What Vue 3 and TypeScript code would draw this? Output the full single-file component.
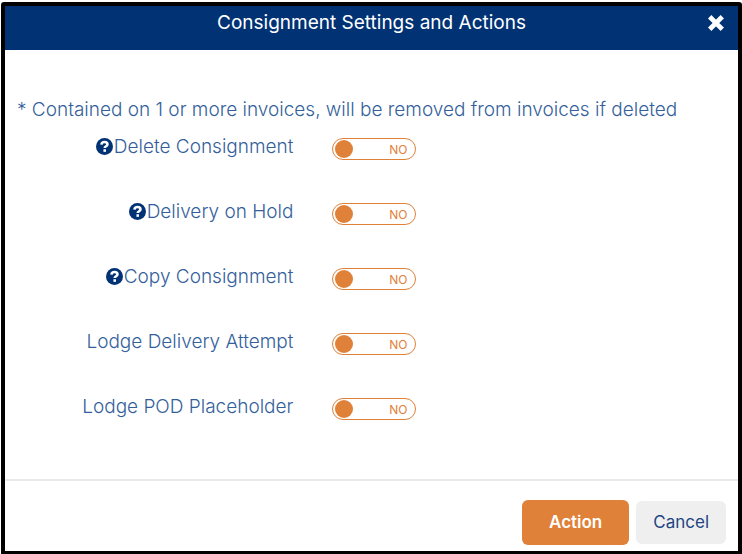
<script setup lang="ts">
import { ref } from 'vue'

interface Setting {
  id: string
  label: string
  help: boolean
  on: boolean
}

const settings = ref<Setting[]>([
  { id: 'delete', label: 'Delete Consignment', help: true, on: false },
  { id: 'hold', label: 'Delivery on Hold', help: true, on: false },
  { id: 'copy', label: 'Copy Consignment', help: true, on: false },
  { id: 'attempt', label: 'Lodge Delivery Attempt', help: false, on: false },
  { id: 'pod', label: 'Lodge POD Placeholder', help: false, on: false },
])
</script>

<template>
  <div class="page">
    <section class="dialog" role="dialog" aria-labelledby="dialog-title">
      <header class="header">
        <h1 id="dialog-title" class="title">Consignment Settings and Actions</h1>
        <button class="close" type="button" aria-label="Close">
          <svg viewBox="0 0 16 16" width="16" height="16" aria-hidden="true">
            <path d="M3.4 3.4 12.6 12.6M12.6 3.4 3.4 12.6" stroke="#fff" stroke-width="4.8" stroke-linecap="square" />
          </svg>
        </button>
      </header>

      <div class="body">
        <p class="note">* Contained on 1 or more invoices, will be removed from invoices if deleted</p>
        <div v-for="s in settings" :key="s.id" class="row">
          <label class="label" :for="s.id">
            <svg v-if="s.help" class="help" viewBox="0 0 16 16" width="17" height="17" aria-hidden="true">
              <circle cx="8" cy="8" r="8" fill="#003274" />
              <path d="M5.1 6.2C5.3 4.5 6.4 3.8 8 3.8c1.7 0 2.8.8 2.8 2.3 0 1.8-2.6 1.6-2.6 3.4" fill="none" stroke="#fff" stroke-width="2.4" />
              <rect x="7" y="10.6" width="2.4" height="2.4" fill="#fff" />
            </svg>
            <span>{{ s.label }}</span>
          </label>
          <span class="toggle">
            <input :id="s.id" v-model="s.on" class="input" type="checkbox" role="switch" />
            <span class="knob"></span>
            <span class="state">{{ s.on ? 'YES' : 'NO' }}</span>
          </span>
        </div>
      </div>

      <footer class="footer">
        <button class="button action" type="button">Action</button>
        <button class="button cancel" type="button">Cancel</button>
      </footer>
    </section>
  </div>
</template>

<style>
body {
  margin: 0;
  background: #fff;
}
</style>

<style scoped>
.page {
  padding: 2px 0 0 1px;
  font-family: Inter, 'Liberation Sans', sans-serif;
  font-size: 19px;
  line-height: 24px;
  color: #345f9b;
}

.dialog {
  border: 4px solid #000;
  border-bottom-width: 3px;
  border-radius: 3px 3px 0 0;
}

.header {
  display: grid;
  grid-template-columns: 32px 1fr 32px;
  padding: 5px 6px 15px;
  background: #003274;
}

.title {
  grid-column: 2;
  margin: 0;
  font-size: 19px;
  font-weight: 400;
  line-height: 24px;
  text-align: center;
  color: #fff;
}

.close {
  display: flex;
  align-items: center;
  justify-content: center;
  padding: 0;
  border: 0;
  background: none;
  cursor: pointer;
}

.body {
  padding: 48px 0 32px;
}

.note {
  margin: 0;
  padding: 0 12px;
  font-weight: 300;
}

.row {
  display: grid;
  grid-template-columns: 5fr 7fr;
  align-items: start;
  height: 65px;
}

.label {
  display: flex;
  align-items: center;
  justify-content: flex-end;
  gap: 1px;
  padding: 13px 17px 0 0;
  font-weight: 300;
}

.help {
  margin-bottom: 2px;
}

.toggle {
  position: relative;
  display: flex;
  align-items: center;
  justify-content: space-between;
  box-sizing: border-box;
  width: 84px;
  height: 22px;
  margin: 16px 0 0 22px;
  padding: 0 8px 0 2px;
  border: 1px solid #df8139;
  border-radius: 11px;
  color: #df8139;
}

.input {
  position: absolute;
  inset: 0;
  width: 100%;
  height: 100%;
  margin: 0;
  opacity: 0;
  cursor: pointer;
}

.knob {
  width: 18px;
  height: 18px;
  border-radius: 50%;
  background: #df8139;
}

.state {
  padding-top: 2px;
  font-size: 12px;
  line-height: 18px;
}

.toggle:has(.input:checked) {
  flex-direction: row-reverse;
  padding: 0 2px 0 8px;
}

.footer {
  display: flex;
  align-items: center;
  justify-content: flex-end;
  gap: 7px;
  padding: 19px 12px 6px;
  border-top: 2px solid #e9e9e9;
}

.button {
  border: 0;
  border-radius: 6px;
  font-family: inherit;
  font-size: 17px;
  line-height: 23px;
  cursor: pointer;
}

.action {
  padding: 11px 27px;
  background: #df8139;
  font-weight: 600;
  color: #fff;
}

.cancel {
  padding: 10px 17px;
  background: #efefef;
  color: #1f4583;
}
</style>
